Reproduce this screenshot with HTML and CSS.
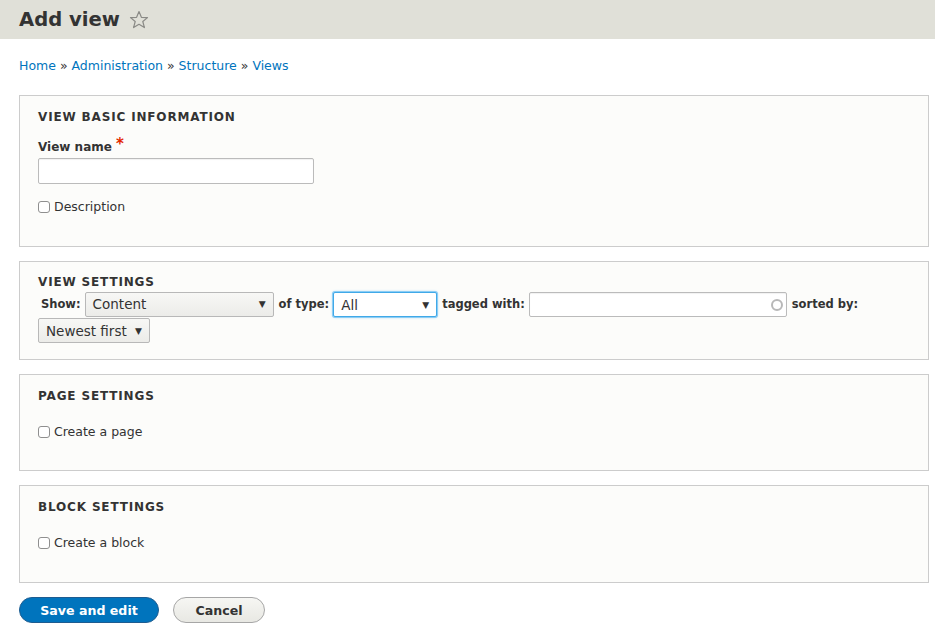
FILE: index.html
```html
<!DOCTYPE html>
<html>
<head>
<meta charset="utf-8">
<link rel="stylesheet" href="styles.css">
</head>
<body>
<header class="page-header">
  <h1 class="title">Add view</h1>
  <svg class="star" width="20" height="20" viewBox="0 0 20 20"><path d="M10 1.6 L12.4 7.3 L18.5 7.6 L13.8 11.5 L15.4 17.6 L10 14.3 L4.6 17.6 L6.2 11.5 L1.5 7.6 L7.6 7.3 Z" fill="none" stroke="#8a8a86" stroke-width="1.2" stroke-linejoin="round"/></svg>
</header>
<main class="content">
  <nav class="breadcrumb"><a href="#">Home</a> » <a href="#">Administration</a> » <a href="#">Structure</a> » <a href="#">Views</a></nav>
  <form class="form">
    <section class="fieldset fs-basic">
      <h2 class="legend">View basic information</h2>
      <label class="label">View name <span class="req">*</span></label>
      <div class="text-input name-input"></div>
      <div class="check-row"><span class="checkbox"></span><span>Description</span></div>
    </section>
    <section class="fieldset fs-view">
      <h2 class="legend">View settings</h2>
      <div class="inline-row">
        <span class="inline-label show-label">Show:</span>
        <div class="select sel-show"><span>Content</span><span class="arrow">▼</span></div>
        <span class="inline-label">of type:</span>
        <div class="select sel-type focused"><span>All</span><span class="arrow">▼</span></div>
        <span class="inline-label">tagged with:</span>
        <div class="text-input tag-input"><span class="throbber"></span></div>
        <span class="inline-label">sorted by:</span>
        <div class="select sel-sort"><span>Newest first</span><span class="arrow">▼</span></div>
      </div>
    </section>
    <section class="fieldset fs-page">
      <h2 class="legend">Page settings</h2>
      <div class="check-row"><span class="checkbox"></span><span>Create a page</span></div>
    </section>
    <section class="fieldset fs-block">
      <h2 class="legend">Block settings</h2>
      <div class="check-row"><span class="checkbox"></span><span>Create a block</span></div>
    </section>
    <div class="actions">
      <button type="button" class="btn btn-primary">Save and edit</button>
      <button type="button" class="btn btn-secondary">Cancel</button>
    </div>
  </form>
</main>
</body>
</html>
```
FILE: styles.css
```css
* { box-sizing: border-box; }
html, body { margin: 0; padding: 0; }
body {
  font-family: "DejaVu Sans", "Liberation Sans", sans-serif;
  font-size: 12px;
  color: #333;
  background: #fff;
  width: 935px;
  overflow: hidden;
}
.page-header {
  background: #e0e0d8;
  height: 39px;
  padding-left: 19px;
  display: flex;
  align-items: center;
  gap: 9px;
}
.title {
  margin: 0;
  font-size: 19.6px;
  font-weight: bold;
  color: #333;
  line-height: 1;
}
.star { margin-top: 1px; }
.content { padding: 0 6px 0 19px; }
.breadcrumb {
  margin-top: 18px;
  height: 18px;
  line-height: 18px;
  font-size: 12.5px;
  color: #333;
}
.breadcrumb a { color: #0074bd; text-decoration: none; }
.form {
  margin-top: 20px;
  display: flex;
  flex-direction: column;
  gap: 14px;
}
.fieldset {
  border: 1px solid #ccc;
  background: #fcfcfa;
  padding: 13px 18px 30px 18px;
}
.legend {
  margin: 0;
  font-size: 12px;
  line-height: 16px;
  height: 16px;
  font-weight: bold;
  text-transform: uppercase;
  letter-spacing: 0.07em;
  color: #333;
}
.label {
  display: block;
  margin-top: 12px;
  line-height: 18px;
  font-weight: bold;
  font-size: 12px;
}
.req { color: #e32700; font-size: 15px; position: relative; top: -2px; }
.text-input {
  border: 1px solid #bbb;
  border-radius: 2px;
  background: #fff;
  height: 26px;
  box-shadow: inset 0 1px 1px rgba(0,0,0,0.06);
}
.name-input { width: 276px; margin-top: 2px; }
.check-row {
  display: flex;
  align-items: center;
  gap: 4px;
  line-height: 18px;
  font-size: 12.5px;
}
.fs-basic .check-row { margin-top: 14px; }
.fs-page .check-row, .fs-block .check-row { margin-top: 19px; }
.fs-page { padding-bottom: 29px; }
.checkbox {
  width: 12px;
  height: 12px;
  border: 1px solid #8f8f8f;
  border-radius: 3px;
  background: #fff;
  display: inline-block;
}
.fs-view { padding-top: 12px; padding-bottom: 16px; }
.inline-row {
  display: flex;
  flex-wrap: wrap;
  align-items: center;
  row-gap: 1px;
  margin-top: 1px;
}
.inline-label {
  font-weight: bold;
  font-size: 11.5px;
  margin: 0 4px 0 5px;
}
.show-label { margin-left: 3px; }
.select {
  height: 25px;
  border: 1px solid #b8b8b8;
  border-radius: 2px;
  background: linear-gradient(#f7f7f5, #ecece9);
  display: flex;
  align-items: center;
  justify-content: space-between;
  padding: 0 7px 0 7px;
  font-size: 13.5px;
  color: #333;
}
.arrow { font-size: 9px; color: #333; }
.sel-show { width: 189px; }
.sel-type { width: 104px; margin-top: 1px; background: #fff; }
.focused {
  border-color: #40a9e8;
  box-shadow: 0 0 0 1px #8ccdf5, 0 0 3px #7ec4f0;
}
.tag-input {
  width: 258px;
  height: 25px;
  margin-top: 1px;
  position: relative;
}
.throbber {
  position: absolute;
  right: 3px;
  top: 6px;
  width: 12px;
  height: 12px;
  border: 2px solid #b8b8b8;
  border-radius: 50%;
}
.sel-sort { width: 112px; }
.actions {
  display: flex;
  gap: 14px;
  align-items: center;
}
.btn {
  height: 26px;
  border-radius: 20px;
  font-family: "DejaVu Sans", "Liberation Sans", sans-serif;
  font-weight: bold;
  font-size: 12.6px;
  padding: 0;
  cursor: pointer;
}
.btn-primary {
  width: 140px;
  background: #0074bd;
  border: 1px solid #1e5c90;
  color: #fff;
}
.btn-secondary {
  width: 92px;
  background: linear-gradient(#f6f6f3, #e8e8e3);
  border: 1px solid #a6a6a6;
  color: #333;
}
```
